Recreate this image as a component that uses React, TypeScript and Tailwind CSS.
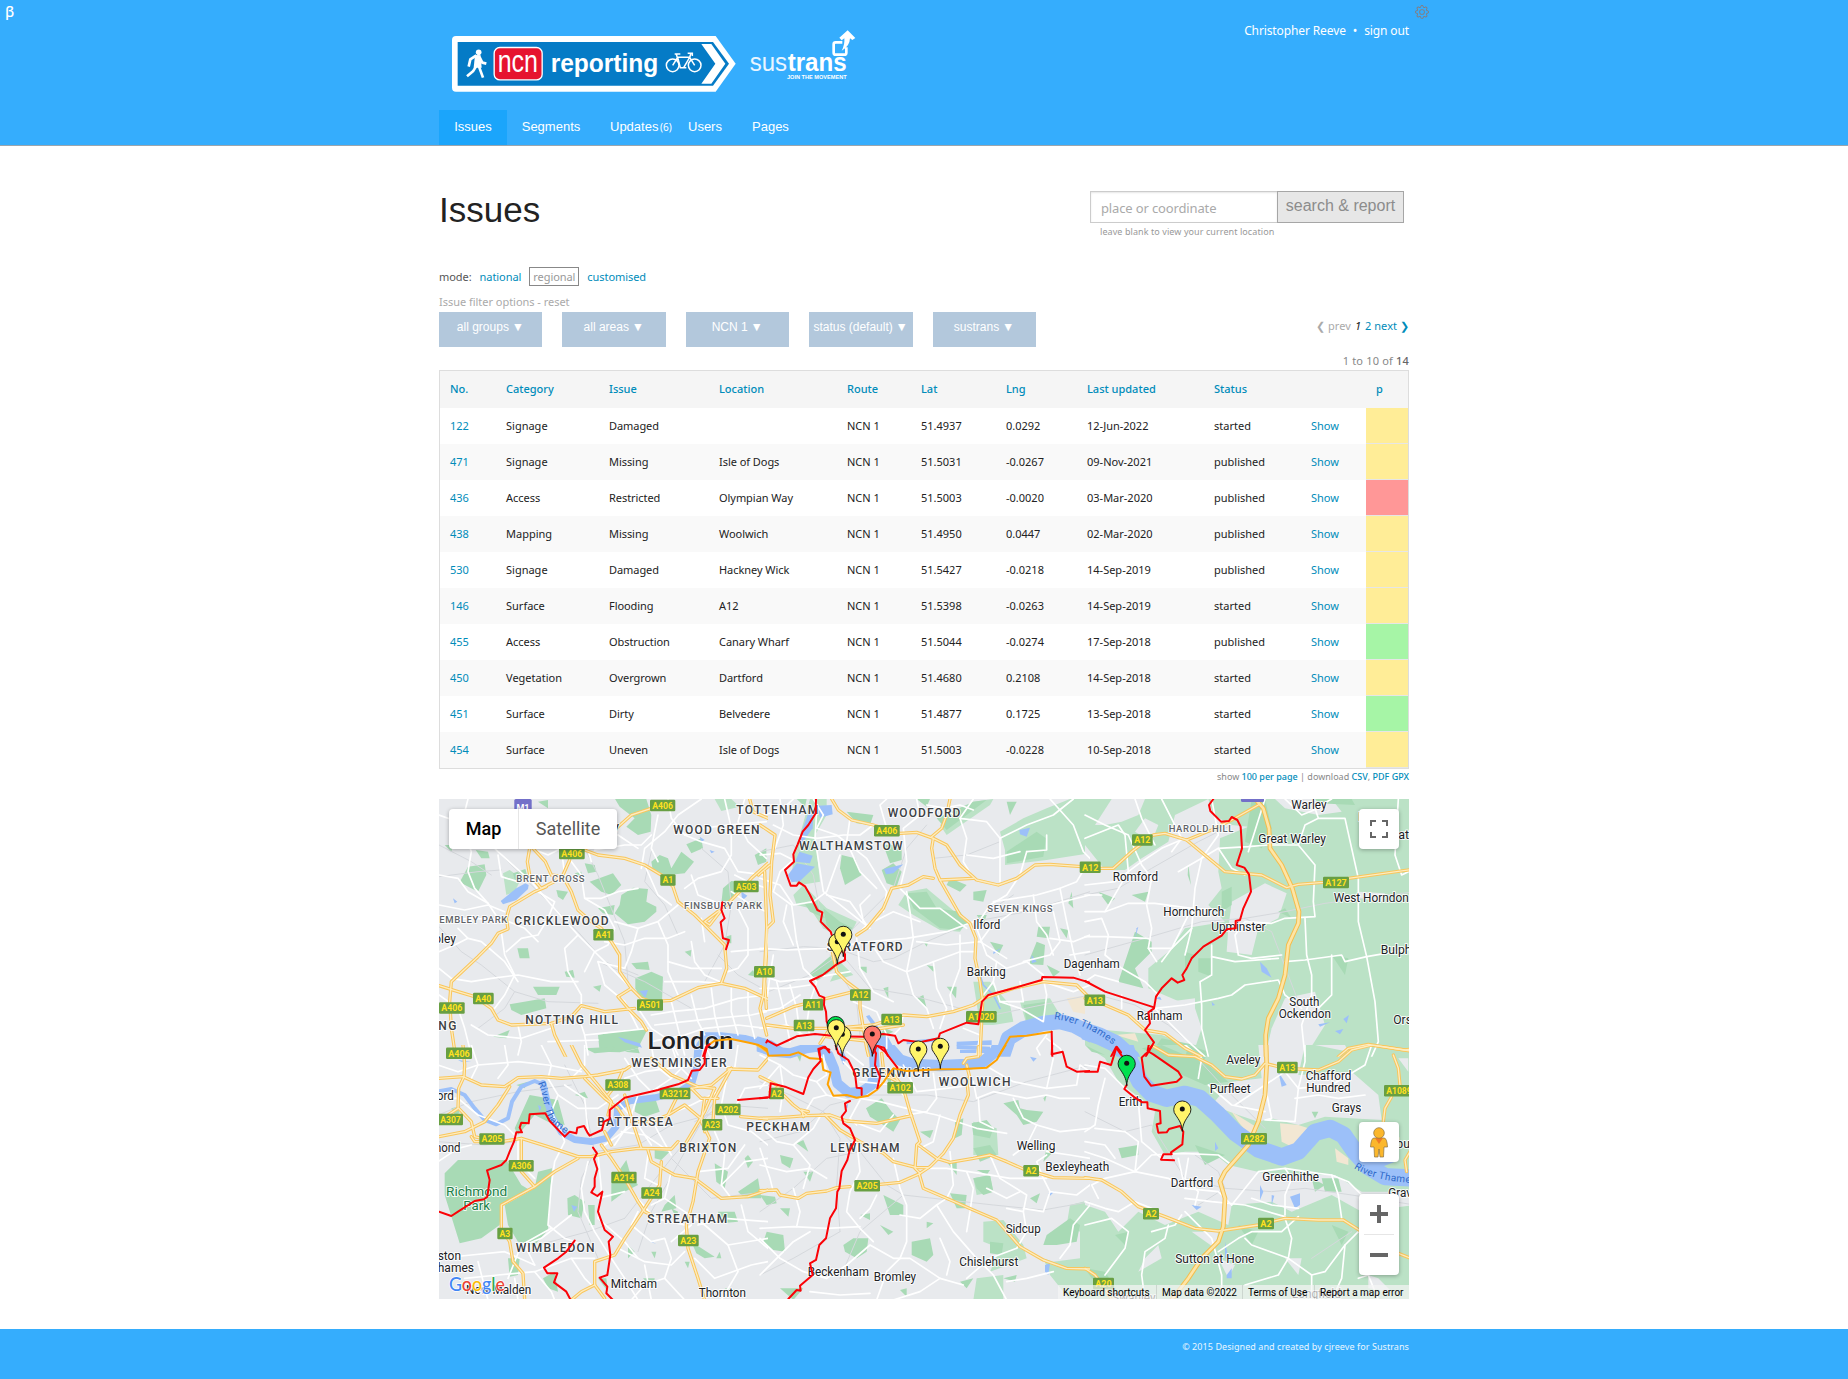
import React from "react";
import { BsGear } from "react-icons/bs";

const rows: string[][] = [
  ["122", "Signage", "Damaged", "", "51.4937", "0.0292", "12-Jun-2022", "started", "y"],
  ["471", "Signage", "Missing", "Isle of Dogs", "51.5031", "-0.0267", "09-Nov-2021", "published", "y"],
  ["436", "Access", "Restricted", "Olympian Way", "51.5003", "-0.0020", "03-Mar-2020", "published", "r"],
  ["438", "Mapping", "Missing", "Woolwich", "51.4950", "0.0447", "02-Mar-2020", "published", "y"],
  ["530", "Signage", "Damaged", "Hackney Wick", "51.5427", "-0.0218", "14-Sep-2019", "published", "y"],
  ["146", "Surface", "Flooding", "A12", "51.5398", "-0.0263", "14-Sep-2019", "started", "y"],
  ["455", "Access", "Obstruction", "Canary Wharf", "51.5044", "-0.0274", "17-Sep-2018", "published", "g"],
  ["450", "Vegetation", "Overgrown", "Dartford", "51.4680", "0.2108", "14-Sep-2018", "started", "y"],
  ["451", "Surface", "Dirty", "Belvedere", "51.4877", "0.1725", "13-Sep-2018", "started", "g"],
  ["454", "Surface", "Uneven", "Isle of Dogs", "51.5003", "-0.0228", "10-Sep-2018", "started", "y"],
];

const priority: Record<string, string> = {
  y: "bg-[#ffed97]",
  r: "bg-[#ff9797]",
  g: "bg-[#a6f5a6]",
};

const COLS =
  "grid grid-cols-[56px_103px_110px_128px_74px_85px_81px_127px_96px_66px_42px] items-center";

/* Each tile covers 330 x 260 map units, drawn on a grid three times finer. */
type Tile = {
  x: number;
  y: number;
  light: string[];
  urban?: string[];
  sand?: string[];
  park: string[];
  lake: string[];
  river: [string, number][];
  rail: string[];
  minor: string[];
  major: string[];
  motorway?: string[];
  red: string[];
  amber: string[];
};

const tiles: Tile[] = [
  {
    x: 438, y: 795,
    light: ["830,12 880,12 905,35 850,48", "195,235 215,225 250,250 230,290 205,300"],
    park: [
      "90,215 140,208 145,240 120,290 65,262", "113,165 150,170 155,190 130,190", "225,235 262,222 270,250 232,260",
      "530,10 625,12 640,60 638,110 600,120 565,95 590,70 545,35", "550,300 585,278 630,282 625,320 655,335 655,350 620,380 570,388 530,355 545,330",
      "455,260 525,235 550,270 520,300 490,290", "440,205 470,210 475,230 450,235", "355,285 390,290 375,315 360,305",
      "640,200 665,180 690,190 700,220 730,170 768,200 740,235 690,240 645,230", "745,148 790,130 795,160 760,175",
      "855,280 880,258 930,262 900,290 880,320 850,325", "238,460 270,460 275,490 245,490",
      "592,550 640,530 675,545 672,620 612,622 592,580", "580,505 630,500 635,525 595,522", "285,575 365,575 355,600 300,600",
      "215,628 320,610 325,640 250,660 220,645", "480,720 560,705 630,700 600,760 545,772 485,770", "465,575 490,570 485,590",
      "380,530 405,525 410,548 385,545", "165,725 215,705 205,730", "930,540 945,525 955,545", "862,425 880,420 880,445 865,445",
      "950,180 985,160 985,200 960,210", "20,150 45,150 40,170", "740,470 760,465 758,485", "480,340 530,330 525,360 495,355",
      "300,20 330,15 330,40", "410,235 430,230 432,250", "940,320 960,318 955,345",
    ],
    lake: [
      "188,318 235,280 262,265 272,270 270,282 235,315 195,328", "605,588 630,585 622,608", "540,725 605,745 612,758 560,742",
      "785,125 800,135 790,140", "45,310 58,320 50,325", "910,290 928,302 912,318", "815,165 830,170 820,175",
    ],
    river: [["780,780 785,750 805,722 850,722 920,730 995,750", 20]],
    rail: [
      "3,395 70,470 130,510 230,590 330,620 480,625", "180,170 280,270 340,330 420,410 500,500 600,540", "3,150 100,200 160,240",
      "790,160 870,230 880,330 860,450 800,560", "3,245 120,230 190,225", "480,500 620,560 760,640", "230,590 200,640 120,700",
      "440,160 480,240 520,340 560,440 570,560", "990,590 900,540 840,480", "640,170 620,260 680,330 720,420",
    ],
    minor: [
      "3,60 60,80 120,110 180,170 280,260 340,330 420,420 500,500 580,580", "90,12 70,90 100,170 90,230 110,280 150,325", "3,240 60,250 90,290 150,325 180,370",
      "3,330 80,345 150,330 200,350", "3,375 100,370 200,375 260,400 300,440", "60,400 90,430 130,440 200,500 240,560", "190,410 200,480 230,540 200,600 170,640",
      "300,290 350,320 330,370 300,420 250,430 205,470", "240,260 190,245 180,180", "370,160 430,240 440,310 500,345 530,400 510,450 470,470 440,530",
      "440,310 490,310 540,290 600,280", "610,220 620,160 680,110 720,60 790,12", "640,120 610,150 560,150 470,165", "690,12 700,70 740,120 790,140 860,160 900,230 980,240",
      "860,12 880,100 880,180 850,230 780,250 740,280", "740,120 790,100 870,90 985,80", "760,240 780,300 830,320 850,350", "530,380 600,400 660,380 720,330",
      "660,380 690,450 690,530 720,600", "600,400 580,470 560,520 480,500", "3,520 40,550 100,560 160,550 240,540 340,560 420,560", "420,420 380,460 390,530 430,600 430,640",
      "3,600 60,640 80,700 100,780", "240,690 250,740 240,780", "100,690 150,720 250,730 340,700", "420,660 440,720 490,715 630,700", "480,500 500,570 560,620 600,700",
      "760,440 770,500 800,540 850,562", "800,440 790,370", "900,340 930,400 930,480 900,520 870,530", "880,470 985,460", "690,500 760,520 850,520", "680,560 780,560 850,565",
      "640,660 700,650 800,640 900,610 985,600", "650,690 740,680 830,670 940,660 985,650", "700,620 720,700 740,780", "760,600 780,680 800,720", "820,580 830,660 845,720", "880,580 880,650 900,720",
      "930,590 930,650 950,730", "640,740 740,720 800,700 900,690 985,700", "600,640 640,700 700,740 720,780", "440,720 450,780", "330,740 480,735", "500,440 560,450 620,430 690,430 740,410",
      "3,470 50,450 90,430", "280,160 330,180 370,160 380,240", "430,90 460,200", "540,120 600,160", "660,60 640,160 660,200", "620,210 660,300 700,330", "880,290 940,330 985,350",
      "920,12 900,80 930,140 985,190", "985,280 930,260 890,240",
    ],
    major: [
      "275,160 268,200 275,240 310,280 345,262 375,240 395,195 395,175", "285,160 322,200 340,240 375,245 400,290 420,345 460,380 490,400 520,440 545,480 545,530 580,580 610,610 640,620 700,616 780,578 850,565 920,580 995,615",
      "325,275 290,290 215,335 205,370 210,402 180,415 160,445 120,485 40,560 35,620 40,700 52,780", "3,572 60,590 110,605 160,640 180,675 220,690 340,685 400,665 430,632 500,650 590,640",
      "440,165 480,180 560,190 620,210 670,240 705,275 720,320 770,360 810,400 860,450 866,520 850,565", "537,98 580,60 640,40 680,40", "990,205 940,250 905,290 865,330 800,380 815,390 850,345",
      "580,580 540,605 570,640 610,680 625,705", "340,685 350,720 385,790", "935,12 945,50 990,70", "980,230 988,440 980,560 985,640",
    ],
    red: ["853,322 850,345 860,370 848,382 855,430 873,435 864,463", "795,785 805,755 815,748", "990,735 985,742"],
    amber: ["812,750 830,737 880,732 940,745 962,750 995,775"],
  },
  {
    x: 760, y: 795,
    light: [
      "150,12 200,12 200,60 165,120 180,260 120,270 95,250 100,190", "100,300 130,270 200,340 290,380 260,440 190,400 150,340 110,330",
      "720,110 790,70 860,40 930,12 990,12 990,175 860,195 735,210 735,165", "540,90 640,20 700,12 690,30 560,120", "640,560 690,560 750,630 760,680 700,690 660,690",
      "210,560 240,500 280,540", "415,330 440,290 500,280 620,380 600,410 540,405 460,360", "780,620 870,610 900,660 800,690",
    ],
    sand: ["920,610 990,600 990,660 940,650"],
    park: [
      "530,70 640,20 680,15 560,105", "370,150 425,150 425,195 390,205", "440,295 500,290 530,340 600,350 625,385 600,405 540,400 460,340", "365,225 400,205 425,230 410,275 380,265",
      "245,180 285,190 305,240 255,270 240,220", "260,50 340,60 330,90 290,85", "740,170 830,110 858,130 850,185 740,205", "150,535 215,480 245,505 190,545 165,560", "640,290 680,285 670,320 640,315",
      "835,395 870,395 865,430 830,425", "810,490 830,440 855,450 850,510 810,508", "790,630 860,620 850,660 800,680", "190,340 240,380 280,400 240,430 200,390", "570,250 620,270 600,290 560,270",
      "470,12 510,12 500,35", "690,440 730,450 715,480", "900,400 925,405 920,430", "560,575 590,575 588,610", "470,610 490,600 500,640", "340,740 375,700 400,710", "925,325 935,290 940,340", "740,20 770,20 750,60",
      "370,580 385,575 385,610", "500,510 525,515 520,530", "130,320 170,330 195,370 150,350", "490,440 505,440 500,455", "860,510 900,530 880,545", "295,515 320,515 320,535", "110,12 140,12 135,35", "650,360 680,360 670,390",
    ],
    lake: ["172,32 215,30 218,58 180,68", "150,40 160,60 158,100 118,155 125,110", "84,240 110,205 165,215 120,258 95,262", "118,170 158,182 150,205 105,200", "372,222 430,208 400,235 378,238", "778,105 810,98 800,125 780,118", "590,740 695,736 695,750 590,752", "600,764 690,762 690,774 600,774", "440,738 540,728 540,738 440,748", "700,470 725,458 700,478", "815,480 830,500 815,505", "318,664 328,660 362,705 350,712"],
    river: [["-5,735 30,745 75,775", 20], ["335,790 350,745 375,735 400,780", 24], ["722,800 745,730 790,702 850,685 900,680 945,692 1000,722", 46], ["660,540 670,570 700,600 720,640", 5]],
    rail: ["0,470 130,455 230,460 340,500 400,490 500,440 640,380 760,300", "200,470 280,400 400,280 440,160 500,90", "0,170 100,150 160,240 190,400", "230,460 330,580 450,600 600,640 700,660 990,600", "0,600 150,540 250,470", "520,190 620,180 720,140", "640,380 800,350 990,290", "210,480 290,620 300,720"],
    minor: [
      "0,60 60,50 100,12", "0,180 60,175 100,195 60,230 40,290 95,330 110,440", "0,250 60,270 100,330 160,320 200,290 240,180", "60,12 70,90 45,160", "190,60 170,100 230,120 320,190 380,290 370,350", "170,50 165,130 190,290 330,400",
      "270,70 260,140 300,230 350,280", "340,90 300,120 250,120 170,130", "470,12 480,60 430,100 440,200 420,280 480,340 540,340 620,400", "580,60 560,40 500,30", "640,12 600,70 620,130 610,200 640,250", "600,70 680,80 720,130 720,260",
      "720,130 800,90 880,60 940,12", "870,12 940,90 970,170 990,190", "800,170 860,165 860,120", "800,170 780,240 740,300 690,330 650,390", "980,210 950,260 900,280 830,300 700,320", "820,300 830,380 860,420 880,480", "900,280 920,380 940,470 960,540",
      "990,300 870,330 760,350 690,400 660,440 740,490", "880,350 900,440 870,480 790,500", "650,400 680,480 740,520 800,500 850,540", "0,460 80,465 200,460 330,440 440,430 560,410 640,380", "100,450 70,380 80,330", "110,440 130,520 170,560 150,620",
      "290,430 300,520 340,590 400,620", "330,440 370,500 440,530 460,600 500,640 520,700", "440,530 520,500 600,470 640,470", "520,500 530,580 560,640 540,700", "440,290 450,350 460,430 440,530", "600,420 600,520 570,600 580,650", "0,540 60,560 150,550 270,530",
      "40,480 30,540 20,620", "0,580 80,580 150,570", "0,650 60,640 120,600", "50,560 70,640 90,740", "90,570 110,640 120,720", "150,620 140,690 150,720", "280,620 350,650 380,720 380,760", "430,660 420,700 400,720", "700,560 720,620 780,640 850,680 860,600 850,550",
      "780,560 790,620 720,620", "850,560 940,590 990,570", "480,380 400,350 320,390 290,420", "320,390 270,320 200,300", "40,90 100,120 170,130", "330,300 300,330 310,380", "380,100 360,30 380,12", "610,700 660,720 650,780", "860,720 830,760 840,780", "860,730 900,760 910,780", "0,700 80,690 130,720", "660,440 560,450 470,440", "710,500 700,560 670,600",
      "545,40 600,30 640,45", "990,420 940,440 870,430", "930,480 990,470", "620,180 700,190 780,170", "190,60 160,12",
    ],
    major: [
      "215,12 235,45 275,75 340,90 420,115 470,112 520,130 560,150 600,210 650,255 715,270 770,250 825,210 870,208 965,215", "520,130 515,160 525,220 540,255 600,360 630,385 648,430 645,490 660,560 668,620 660,780", "515,125 545,100 560,60 570,12", "540,255 640,250", "520,250 490,245 445,270 395,280 370,340 320,400 290,420",
      "0,90 45,120 35,200 30,300 40,380 20,400 10,600 0,640 20,720", "-5,240 30,210", "20,670 100,635 200,610 280,590", "215,460 230,530 260,560 300,590 300,640 320,760 330,800", "20,690 100,700 220,700 340,690 430,660 500,665 580,650 640,630 670,610 760,580 850,560 950,570 990,610", "200,725 320,738", "180,745 210,700 330,705 430,690",
    ],
    red: [
      "168,12 167,55 145,90 128,110 113,148 100,178 102,200 75,225 92,272 110,272 117,262 135,274 150,300 172,345 187,352 182,380 212,410 225,450 255,478 255,495 230,508 188,540 150,558 165,575 178,602 193,608 192,630 198,650 200,680 212,705",
      "22,737 50,752 80,738 110,724 165,717 230,724 310,725 370,717 405,722 415,745 430,735 480,742 535,730 540,715 620,683 655,688 666,620 685,600 760,580 845,555 847,546 940,548 995,565",
      "180,785 178,765 190,757 208,764", "340,775 350,752 372,758 385,785", "875,710 877,785", "255,450 252,480",
    ],
    amber: ["715,785 750,725 800,722 875,710"],
  },
  {
    x: 1085, y: 795,
    light: ["0,12 60,12 0,70", "0,12 990,12 990,785 0,785"],
    urban: [
      "80,12 180,12 160,60 110,80 60,90 30,90", "0,150 60,225 120,225 170,190 250,140 270,60 370,12 385,60 440,90 490,95 405,130 400,230 410,280 370,330 420,380 300,400 250,470 190,520 190,580 330,640 350,700 330,760 230,720 0,700",
      "440,320 540,265 605,295 580,370 520,400 500,480 425,470 430,400", "570,12 740,12 770,50 700,60 600,40", "820,290 900,295 890,320 820,310", "600,610 690,590 720,690 660,785 540,785 560,700", "250,620 330,610 330,650 260,650", "150,110 180,70 220,90 200,140",
    ],
    sand: ["0,690 90,720 150,715 160,740 60,710"],
    park: ["150,410 200,440 200,470 150,520 175,580 100,560", "410,290 440,275 440,330 410,350", "340,490 380,490 380,545 340,530", "500,12 540,12 560,100 530,160 480,140", "690,12 800,12 810,30 700,25", "580,350 600,340 620,370", "230,730 330,750 350,785 190,785", "300,470 330,480 300,520", "740,480 790,490 780,540", "310,210 318,270 308,240", "40,290 90,310 70,330", "850,90 900,110 890,150", "140,300 190,290 180,320"],
    lake: ["525,500 545,520 560,548 530,530", "775,672 792,660 785,685", "700,688 735,682 705,695", "750,708 775,702 765,718", "155,400 160,395 150,432", "210,610 225,605 230,615", "380,620 390,630 382,632"],
    river: [["-20,702 40,722 90,745 140,790", 52]],
    rail: ["0,300 100,280 200,220 340,140 440,90", "0,480 180,430 350,380 480,370 600,350 720,325 990,290", "480,370 560,410 640,620", "40,600 150,630 250,690 310,740"],
    minor: [
      "0,60 60,90 130,120 170,210 200,250 185,330 200,400 190,460 215,500", "0,270 90,260 170,200 230,160 300,130", "0,350 60,350 130,325 210,325 320,340 420,345", "0,380 50,370 70,420 60,480 110,520 180,560 220,600", "150,12 170,70 210,150", "230,12 290,130 260,170",
      "280,230 350,190 400,160 490,155 550,150", "350,190 330,280 320,400 300,480", "320,340 260,460 230,500", "380,12 400,120 350,190", "550,150 640,150 690,210 685,320 690,365 600,370 560,385 480,380 450,420 460,480 500,490 590,480",
      "640,150 660,90 700,70 690,40 740,12", "600,12 650,60 700,40", "700,70 780,70 800,160 820,250 820,380 845,485 780,500 770,480 660,495 600,500", "940,12 930,180 950,240 970,230", "845,485 990,460", "660,370 665,480 680,540 680,600 650,690 660,785", "380,450 380,540 345,560 350,630 350,700 370,785",
      "380,485 450,500 580,490", "210,640 300,630 400,610 440,600 480,570 580,555 600,600 650,640", "0,425 60,425 190,430", "100,560 30,540 0,560", "210,640 260,690 310,740 360,785", "50,300 0,300", "190,460 260,460 290,430 320,400", "400,160 440,220 480,240", "60,350 130,230 120,120 100,90 0,130", "110,600 110,640", "740,480 740,600 700,640", "490,170 540,12", "860,785 880,740 870,620 845,485",
    ],
    major: ["-10,220 85,220 140,170 205,120 240,115 305,135 420,230 530,240 605,278 640,268 715,262 790,250 990,222", "305,135 380,105 440,75 520,30 525,12", "0,610 60,630 130,660 180,705 240,715 300,760 350,785", "760,785 790,760 850,748 990,770"],
    motorway: ["500,0 535,40 552,100 555,160 590,210 622,280 642,350 640,385 610,450 600,540 580,610 550,670 542,720 543,790"],
    red: [
      "385,12 372,30 376,48 408,80 432,78 440,66 457,75 467,95 471,160 455,210 478,218 492,238 498,290 475,340 465,375 452,378 452,400 425,403 410,422 355,455 320,490 305,520 292,540 298,555 278,563 260,550 230,580 213,605 207,640 190,652 195,685 180,705 207,742 182,785", "0,558 60,590 207,637", "78,785 93,757 112,785",
    ],
    amber: [],
  },
  {
    x: 438, y: 1045,
    light: [],
    park: [
      "20,385 60,345 205,345 250,420 275,435 190,480 185,540 130,580 65,595 20,450", "200,480 290,430 300,380 342,370 335,480 330,555 290,600 240,590 210,540", "275,150 360,165 380,240 330,230 290,210 240,270 230,250", "290,155 315,170 310,200", "595,155 650,155 665,200 620,215 590,200", "650,315 695,320 670,345 650,340",
      "388,460 410,450 440,470 430,520 390,510", "520,410 565,345 575,380 600,420 560,440 520,470", "410,150 440,140 450,160", "680,480 710,450 715,490 670,500", "830,355 870,380 860,430 835,410", "840,500 890,500 900,530 850,535", "775,625 760,590 830,635 800,640", "210,640 245,640 240,690 215,695", "315,700 350,680 360,740 330,730",
      "615,700 650,700 645,730", "930,330 945,350 930,370 920,340", "700,490 720,500 715,520", "740,650 755,650 750,670", "570,600 590,620 570,640", "40,190 60,185 65,205 50,210", "235,120 270,110 260,130", "480,700 505,700 510,740", "900,440 960,400 970,460 920,460", "450,480 470,480 470,540 455,540", "860,730 900,735 890,755", "845,620 850,640 835,640", "640,620 655,620 650,640", "560,20 600,10 605,25", "440,10 530,5 520,20 470,25",
    ],
    lake: ["400,480 418,485 408,500", "300,180 310,185 305,200", "630,585 655,597 640,592", "60,45 100,50 70,50"],
    river: [["-5,140 40,132 80,150 110,190 140,225 175,238 210,220 222,170 250,125 290,108 318,120", 12], ["315,115 328,170 342,215 370,262 410,284 460,290 505,280 535,245 538,190 575,168 650,158 720,142 762,115 775,70 778,20 785,-20", 20]],
    rail: ["0,210 100,170 240,140 400,120", "380,60 440,180 470,320 430,400 420,500 480,640", "240,290 140,300 0,290", "470,320 600,300 700,240 850,200", "560,520 700,340 820,200", "300,600 450,560 560,520", "700,340 820,460 990,440", "870,100 780,250 640,500 600,620", "770,230 860,180 990,190"],
    minor: [
      "100,0 120,60 100,100", "200,0 210,60 180,100", "310,0 340,60 330,100", "440,0 440,60 400,100", "0,160 60,160 120,210 200,240 240,280", "0,350 60,310 100,300", "330,100 360,150 420,190 480,190 540,150", "360,150 340,200 370,260 380,290 350,350 340,420 330,540 380,580 440,600",
      "380,120 440,160 450,260", "450,350 430,430 440,500 470,560 520,640", "480,330 490,430 480,520 560,590 600,640", "340,550 250,600 210,700", "240,280 240,350 290,400", "0,640 100,630 200,620 290,660", "290,660 260,600 310,580 400,510", "80,700 180,690 290,680 400,640 470,640", "290,680 340,740 350,765", "400,640 440,700 460,720",
      "520,640 560,700 600,765", "540,610 620,650 700,660 740,620", "600,500 580,540 640,590 680,580 700,640 680,700 740,765", "560,440 480,460", "540,170 600,240 640,300", "600,150 570,240 530,300", "500,300 600,230 690,210 760,180 840,140", "560,40 600,100 640,140 700,100 740,60", "640,0 650,60 700,100", "560,100 620,80 690,70 780,60", "700,0 720,60 760,100",
      "870,80 850,180 870,240 940,260 990,300", "880,210 920,130 990,120", "830,260 860,330 850,420 880,460", "850,420 920,350 990,340", "780,380 870,370 920,300", "700,380 680,460 640,480", "680,460 740,500 800,540 870,600 900,680 850,765", "760,540 700,590", "780,540 860,520 990,530", "870,600 990,580", "770,640 830,700 940,660 990,650",
      "630,330 620,400 660,420", "590,450 650,520 740,540", "910,480 930,560 990,610", "550,260 620,270 680,310", "800,0 830,60 900,70", "900,0 890,70", "0,60 60,80 120,60 240,50 330,60 430,80", "230,700 240,765", "120,650 150,765", "700,330 660,260 640,220", "620,660 640,765", "680,700 620,720 580,765",
    ],
    major: [
      "3,100 75,95 130,120 200,125 240,98 310,95 370,100 440,95 480,90 560,75 575,65", "75,0 80,60 78,95 62,130 60,190 0,230", "62,190 100,230 110,275 130,280", "3,275 80,260 140,230 180,180 215,125", "100,275 110,290 190,290 250,280 330,305 420,335 460,335 520,320 600,310 700,312 720,290",
      "420,340 350,380 290,425 190,480 190,550 215,590 225,650 255,685 260,765", "250,280 250,380 290,425", "400,0 430,60 480,120 520,170 510,210", "440,100 500,160 540,190 560,220", "555,75 540,110 510,150", "560,150 580,220 610,310", "490,300 520,340 560,400 600,470 620,500 640,510", "520,300 500,260",
      "630,315 640,350 710,390 770,400 850,460 930,455 990,435", "670,350 665,420 620,490 560,580 530,630 470,650 470,720 430,740 400,765", "470,720 500,760", "800,160 790,230 815,280 780,380 765,470 745,540 750,610 780,700 800,765", "880,70 820,120 760,130 720,150 690,210 640,230 580,230", "880,70 830,160 825,230 800,260",
      "640,40 700,90 780,125 830,130", "870,72 960,75 990,40", "690,210 740,180 800,230", "740,300 800,200 830,130", "908,215 990,222", "840,160 790,160 760,130", "960,0 990,20",
    ],
    red: [
      "810,-5 800,30 800,55 785,75 762,77 750,105 720,118 682,128 660,135 560,158 515,195 515,222 498,230 492,255 455,272 448,262 438,243 418,248 415,265 395,260 380,275 335,228 322,205 275,208 272,235 250,233 245,248 252,262 235,262 228,290 215,320 205,345 190,360 147,376 155,405 148,455 138,463 110,468 60,500 40,513 3,500",
      "465,308 477,325 468,342 478,372 470,400 470,425 460,442 478,453 493,440 480,500 500,555 525,575 512,590 517,630 508,690 485,698 508,725 505,745 525,765", "410,587 385,620 360,640 318,668 328,685 358,685 348,712 385,740 398,765", "900,165 995,157",
    ],
    amber: [],
  },
  {
    x: 760, y: 1045,
    light: ["990,465 930,480 920,540 960,560 960,640 880,650 850,640 870,690 930,765 990,765", "670,530 730,525 790,600 800,640 690,680 720,610 670,590", "640,230 710,250 715,330 640,330", "640,400 690,390 700,440 650,450", "650,700 730,690 730,765 640,765"],
    park: [
      "318,190 365,160 395,200 420,225 400,260 370,240 330,215", "635,235 680,225 700,250 690,280 640,270", "585,230 610,220 605,270 585,280", "730,175 775,165 780,190 800,195 850,200 830,230 790,240 770,210", "640,310 690,300 710,330 660,350", "850,160 860,150 855,170", "20,560 70,570 75,620 40,615 10,590", "250,600 280,580 325,580 320,620 290,640 255,620",
      "455,590 510,580 520,630 500,650 455,630", "370,450 430,480 430,510 390,510", "570,445 620,450 615,490 590,490", "640,400 690,390 700,440 670,450 650,430", "560,350 590,350 590,390", "60,330 100,340 90,370 65,355", "110,295 130,285 145,320", "130,380 160,380 150,410", "0,450 45,455 50,475 20,480", "810,460 840,445 830,475", "300,510 330,505 330,525",
      "860,570 930,520 960,540 950,590 890,600 850,600", "360,540 400,560 385,570", "60,490 90,490 85,515", "690,590 730,595 725,630 690,625", "600,710 640,700 620,730", "730,700 770,690 765,710", "860,310 880,320 850,350", "650,375 690,375 680,390", "380,100 395,95 390,125", "60,730 130,730 100,765", "480,260 520,255 510,280", "420,735 440,730 440,755", "100,10 130,10 120,50", "500,530 520,535 500,550",
    ],
    lake: ["855,660 870,655 865,690 855,680", "865,445 885,438 870,452", "265,175 262,190 255,185", "235,25 245,10 260,40 250,60", "590,0 690,5 690,14 590,12", "810,35 830,40 820,50"],
    river: [["-5,5 40,20 90,25 140,10 175,5 205,30 222,70 232,115 265,143 305,140 335,120 345,80 342,30 335,-15", 30], ["375,-20 390,10 420,45 460,58 540,62 620,58 670,50 705,20 722,-20", 34]],
    rail: ["0,110 90,150 190,200 300,320 380,420 430,450 700,480 850,495 990,470", "190,200 240,280 230,420 240,560", "0,290 120,260 210,180 330,150 500,150 640,170 800,110 990,60", "300,320 200,340 100,430 0,500", "240,560 100,640 0,690", "430,450 300,560 240,700"],
    minor: [
      "0,130 60,60 100,90 170,110 200,150", "60,200 70,130 60,60", "130,210 160,160 200,150 260,165", "300,160 360,170 440,190 530,210 650,250 740,265", "300,165 270,220 290,240", "0,245 50,290 100,300 160,250 180,215", "100,300 150,360 130,430", "0,310 30,400 40,440", "0,360 80,380 150,370 200,400",
      "290,290 300,380 270,440 260,500 300,550 340,590", "400,340 420,430 440,480 440,590 420,640", "0,550 100,545 200,550 300,545", "0,580 60,640 130,680 200,700", "0,690 50,640 100,590 150,560", "200,700 260,660 330,600 400,640 450,640 540,700 610,720", "540,700 480,740 400,765", "150,740 240,750 330,745", "420,640 380,680 350,765",
      "470,370 560,370 660,385 750,400 860,400", "570,320 580,420 560,460 530,480 580,560 650,640", "530,480 480,520 420,510", "620,380 640,430 630,500 620,560", "690,330 720,400 800,450 790,500 740,490", "790,500 800,560 770,610", "640,110 650,160 700,140 800,160 860,150 900,160 990,160", "655,160 660,230 700,250", "760,160 790,220 830,240 800,300 760,330",
      "830,240 900,260 990,250", "860,330 830,350 850,400 870,440 950,450 990,420", "870,440 850,500 790,490", "990,480 940,540 930,600 900,640", "650,640 700,690 740,765", "770,610 690,640 620,700", "430,60 470,140 560,130 640,120", "520,85 530,160 500,200 440,210", "540,210 520,290 480,310", "400,210 360,260 280,230", "690,70 760,110 860,130 880,40",
      "860,130 950,120 960,60 990,80", "300,110 400,120 440,160", "540,580 570,650 560,690", "350,450 330,490 300,520", "680,430 740,460 780,440", "0,30 60,60", "880,680 800,700 740,710", "990,340 930,330 860,320", "190,30 200,90 170,110", "250,50 290,90", "260,20 310,60", "100,430 120,500 110,545",
    ],
    major: [
      "0,220 60,218 140,212 210,210 260,228 350,235 455,212", "60,140 100,180 140,210", "130,215 125,195 145,200", "195,210 240,255 300,290 370,325 400,350 470,368 505,368", "395,80 430,130 450,200 480,290 470,300 465,370 480,385", "475,300 530,340 570,352 640,340 690,330 740,350 790,372", "838,385 880,398 990,400", "620,100 625,150 600,210 580,280 550,325 510,365 475,388 420,412 360,418",
      "270,425 230,428 200,438 140,445 115,460 60,450 50,435 0,437", "478,388 490,430 560,460 640,495 710,525 780,605 850,645 920,670 990,672", "610,55 620,40 655,35 655,5", "0,95 60,125 30,140", "365,25 370,70 385,95 450,130",
      "620,60 630,100",
    ],
    red: [
      "0,160 28,157 32,115 75,125 130,147 145,97 160,72 182,48 175,12 195,5 208,22", "225,-5 235,25 265,45 285,85 290,128 305,130 305,150", "335,0 348,25 345,60 360,95 352,130", "350,0 375,20 412,68", "877,-5 875,28 908,20 920,65 950,80 990,78",
      "270,168 255,175 258,198 245,215 250,235 270,250 285,285 268,320 262,345 245,378 238,430 232,440 228,490 210,520 198,580 178,600 168,645 150,655 158,690 120,722 122,737 110,735 85,762",
    ],
    amber: ["-5,0 20,12 25,32 90,30 115,22 150,40 185,42 190,75 212,82 203,118 220,152 260,150 290,158 325,152 350,135 370,112 385,90 400,70 440,78 540,73 610,72 680,68 710,45 737,0"],
  },
  {
    x: 1085, y: 1045,
    light: ["0,0 990,0 990,765 0,765"],
    urban: [
      "0,0 60,40 100,110 180,170 210,200 200,260 240,330 300,320 380,320 430,360 560,390 750,390 830,440 990,440 990,480 830,500 740,450 620,500 560,470 440,480 430,540 340,500 240,540 160,500 100,560 60,500 0,480", "520,0 660,0 640,90 800,80 880,150 890,225 720,215 640,240 560,220 520,230 460,210 380,180 440,110 530,100",
      "690,0 780,0 790,20", "180,640 220,600 230,640 160,680", "320,560 400,560 390,610", "880,700 850,690 850,730 920,740", "600,640 650,640 640,690", "400,640 450,660 430,700", "940,40 970,40 970,80",
    ],
    sand: ["585,235 640,240 670,250 630,310 590,290", "440,200 520,250 500,280 460,230", "750,310 790,340 790,360 755,350"],
    park: ["170,10 230,0 370,60 430,110 360,120 280,85 200,25", "310,0 370,20 350,60 300,40", "0,0 60,30 20,20", "100,310 160,300 160,330 110,340", "710,400 760,400 770,440 720,440", "0,670 60,680 100,740 20,700", "590,310 600,320 580,320", "740,540 790,560 770,600", "90,570 130,560 120,600", "330,300 420,330 360,360", "680,400 720,420 690,440", "460,540 520,560 500,600", "680,200 700,200 690,220"],
    lake: ["615,455 645,445 645,480 630,490", "525,420 535,440 525,465", "320,480 350,485 335,495", "420,590 430,640 420,640", "425,690 440,670 440,700 425,700", "870,350 930,350 880,370", "580,80 605,120 590,125", "390,290 400,310 390,318", "560,450 568,452 560,480"],
    river: [["115,-10 135,50 165,110 200,145 245,160 300,148 345,160 395,205 450,262 520,312 590,336 640,318 690,262 735,250 775,270 810,320 850,365 900,395 1000,400", 52]],
    rail: ["0,200 120,260 200,240 300,400 420,430", "420,430 560,440 660,430 800,450 990,480", "300,0 420,130 540,250", "680,640 800,560", "340,480 420,430 400,380 330,330"],
    minor: [
      "0,60 60,70 110,120 160,170 170,290 230,340", "60,100 40,180 30,240 0,260", "0,320 60,340 150,380 200,330 290,325 400,330 440,360", "150,380 160,290 120,260 30,250", "150,380 250,400 300,430 400,440 440,480", "0,470 60,490 100,500 150,470 200,490", "40,460 20,420 60,400 150,380", "300,460 380,470 480,480 600,515",
      "440,480 520,380 600,370 700,385 740,390 790,410 830,450", "600,370 620,400 600,450 600,510", "740,390 760,450 770,520", "640,515 590,560 500,560 460,580 400,620", "600,520 620,580 610,640 500,600 480,580", "610,640 680,690 680,765", "680,690 720,680 780,600 820,560", "780,600 770,700 740,765", "300,430 280,340", "250,540 240,580 180,620 170,690 180,765",
      "0,540 80,520 130,560 120,610 60,690", "300,500 380,580 410,690 410,765", "450,180 540,120 600,80", "370,120 440,180 540,200", "540,120 560,220 540,225 630,230 640,130 600,80", "640,130 740,120 790,90", "630,160 700,150 760,160 840,150", "660,0 660,50 640,130", "860,0 840,60 790,90", "330,480 340,440 300,400 310,340", "200,560 270,540 290,510", "500,460 560,480 640,490",
      "820,700 850,690 880,765", "300,0 350,40 340,100", "0,290 60,300 90,340", "480,720 580,690 610,640",
    ],
    major: [
      "190,-5 250,30 330,35 380,60 420,95 470,102 510,90 540,55 600,70 700,75 760,50 800,15 860,0 960,15 990,10", "925,30 940,70 945,120", "0,398 50,405 110,440 160,485 240,515 330,550 400,558 520,540 600,520 700,525 775,525 830,560", "895,230 900,190 920,155", "940,625 990,645", "0,670 30,690 60,730 80,765", "975,320 960,345 965,380",
    ],
    motorway: ["543,-5 545,60 540,150 520,230 490,300 420,380 405,410 420,460 415,545 400,590 350,640 310,700 260,765"],
    red: [
      "0,80 38,80 45,50 78,60 95,5 108,22", "205,-5 190,20 180,28 170,38 178,95 198,122 275,110 290,97 280,80 205,28 188,18 192,-5", "125,120 118,132 150,158 172,172 187,172 188,190 225,198 227,235 215,238 220,263 245,262 252,252 285,243 295,260 292,298 258,322 260,328 235,328 228,344 267,346",
    ],
    amber: [],
  },
];

/* text, left, baseline, width, kind */
type Kind = "c" | "s" | "t" | "l" | "g";
const labels: [string, number, number, number, Kind][] = [
  ["TOTTENHAM", 736.3, 814, 82, "c"], ["WOOD GREEN", 673.3, 834, 86.3, "c"], ["Finchley", 571, 831, 48, "t"], ["BRENT CROSS", 516.3, 882.3, 68.3, "s"],
  ["FINSBURY PARK", 684, 909.3, 78, "s"], ["EMBLEY PARK", 439.3, 923.3, 68, "s"], ["CRICKLEWOOD", 514.3, 925, 94.3, "c"], ["Wembley", 407, 943, 49, "t"],
  ["NOTTING HILL", 525.3, 1024.3, 92.7, "c"], ["London", 647.5, 1049, 86, "l"], ["EALING", 407, 1029.7, 49.5, "c"],
  ["WOODFORD", 887.7, 817, 72.7, "c"], ["WALTHAMSTOW", 799, 850, 103.7, "c"], ["SEVEN KINGS", 987.3, 912.3, 65.3, "s"], ["Ilford", 973.3, 929, 27, "t"],
  ["Barking", 966.7, 976, 39, "t"], ["Dagenham", 1063.7, 967.5, 56, "t"], ["STRATFORD", 826.7, 951, 76, "c"],
  ["Warley", 1291.3, 809.3, 35.3, "t"], ["Great Warley", 1258.3, 843, 67.7, "t"], ["HAROLD HILL", 1168.7, 832.3, 64.7, "s"], ["Romford", 1112.7, 881, 45.3, "t"],
  ["West Horndon", 1333.7, 902, 75, "t"], ["Hornchurch", 1163.3, 916, 61, "t"], ["Upminster", 1211.3, 931, 54.3, "t"], ["Bulphan", 1380.7, 954, 44, "t"],
  ["Rainham", 1136.7, 1020, 45.7, "t"], ["South", 1289.3, 1006, 30, "t"], ["Ockendon", 1278.7, 1018, 52.3, "t"], ["Orsett", 1393.3, 1024, 33, "t"], ["Little", 1358, 821, 27, "t"], ["Great", 1379, 839, 30, "t"],
  ["WESTMINSTER", 631.3, 1067, 95.3, "c"], ["Brentford", 405, 1099.5, 49, "t"], ["BATTERSEA", 597.3, 1126.3, 75.3, "c"], ["PECKHAM", 746.3, 1131, 63.7, "c"],
  ["BRIXTON", 679.3, 1152, 57, "c"], ["Richmond", 409, 1151.7, 51.5, "t"], ["Richmond", 446, 1195.5, 61.3, "g"], ["Park", 463.3, 1209.5, 26.7, "g"],
  ["STREATHAM", 647.3, 1222.7, 80, "c"], ["WIMBLEDON", 515.7, 1251.7, 78.7, "c"], ["Kingston", 414, 1260, 47, "t"], ["upon Thames", 401, 1272, 73, "t"],
  ["New Malden", 466, 1294, 65.3, "t"], ["Mitcham", 610.7, 1287.7, 46.3, "t"], ["Thornton", 698.7, 1296.7, 47.3, "t"],
  ["GREENWICH", 852.3, 1077, 77.7, "c"], ["WOOLWICH", 938.7, 1086, 71.7, "c"], ["LEWISHAM", 830.3, 1152, 69.3, "c"], ["Welling", 1016.7, 1150, 38.7, "t"],
  ["Bexleyheath", 1045.3, 1170.7, 64, "t"], ["Beckenham", 807.7, 1275.7, 61.3, "t"], ["Bromley", 873.7, 1280.7, 42.3, "t"], ["Chislehurst", 959.3, 1265.7, 59, "t"], ["Sidcup", 1005.7, 1232.7, 35, "t"],
  ["Aveley", 1226.3, 1063.7, 34, "t"], ["Chafford", 1305.7, 1079.7, 45.7, "t"], ["Hundred", 1306.3, 1091.7, 44.3, "t"], ["Purfleet", 1209.7, 1092.7, 41, "t"], ["Grays", 1331.7, 1111.7, 29.7, "t"],
  ["Erith", 1118.7, 1105.7, 23.7, "t"], ["Greenhithe", 1262.3, 1181, 56.7, "t"], ["Dartford", 1170.7, 1186.7, 42.7, "t"], ["Sutton at Hone", 1175.3, 1262.7, 79, "t"],
  ["Tilbury", 1383, 1147.5, 37, "t"], ["Gravesend", 1388.3, 1197, 55, "t"], ["Swanley", 1112.3, 1302.3, 43.3, "t"], ["Longfield", 1291.7, 1298.3, 49.3, "t"],
];

const kinds: Record<Kind, { size: number; fill: string; weight: number }> = {
  c: { size: 12, fill: "#3c4043", weight: 500 },
  s: { size: 9.5, fill: "#5f6368", weight: 500 },
  t: { size: 12, fill: "#202124", weight: 400 },
  l: { size: 24.5, fill: "#202124", weight: 500 },
  g: { size: 13, fill: "#218049", weight: 400 },
};

/* text, left, top, width */
const shields: [string, number, number, number][] = [
  ["A406", 650, 799.7, 25.3], ["A406", 559, 847.7, 25.7], ["A1", 660.3, 874.3, 15.3], ["A503", 733.7, 880.7, 25], ["A41", 593.3, 929, 20.3], ["A40", 473, 992.7, 20.7],
  ["A406", 439, 1002.3, 25.7], ["A501", 637, 999.3, 26], ["A10", 754, 966, 20.7], ["A406", 446, 1047.5, 26], ["A406", 874, 825, 25.7], ["A12", 850, 989.3, 20.7], ["A11", 803, 999, 20.3],
  ["A13", 793.7, 1019.7, 20.7], ["A13", 881.3, 1013.7, 20.7], ["A1020", 966, 1011, 30.7], ["A12", 1079.7, 861.5, 21], ["A12", 1132, 834.3, 20.7], ["A127", 1323, 876.7, 26], ["A13", 1084.5, 994.5, 20.7],
  ["A308", 605.3, 1079.3, 25.3], ["A3212", 659.7, 1087.7, 30.7], ["A202", 715.3, 1103.7, 25.3], ["A23", 702.3, 1119, 20], ["A307", 438, 1113.7, 25], ["A205", 479.3, 1133.3, 25.3], ["A306", 508.7, 1160, 25], ["A214", 611.3, 1171.7, 25.3],
  ["A24", 641.3, 1187.3, 20.7], ["A23", 678, 1234.7, 20.7], ["A3", 497.3, 1227.7, 15.3], ["A2", 769, 1087.7, 15], ["A102", 887.3, 1082, 25.7], ["A2", 1023.3, 1165, 15.7], ["A205", 854.3, 1180, 25.7],
  ["A13", 1277, 1061.7, 20.7], ["A1089", 1384, 1085, 30], ["A282", 1241, 1133, 26], ["A2", 1143, 1208, 16], ["A2", 1258, 1217.7, 16], ["A20", 1093, 1277.7, 21],
];

const pins: [number, number, string][] = [
  [837.3, 941.7, "#fff56a"], [843.3, 934.3, "#fff56a"], [835.7, 1024.5, "#00e04f"], [842.3, 1034.3, "#fff56a"], [836.3, 1027.7, "#fff56a"],
  [872.3, 1034, "#ff776b"], [918.3, 1049, "#fff56a"], [940.3, 1046.3, "#fff56a"], [1126.7, 1063.3, "#00e04f"], [1182.3, 1109, "#fff56a"],
];

function Layer({ children }: { children: (t: Tile) => React.ReactNode }) {
  return (
    <>
      {tiles.map((t, i) => (
        <g key={i} transform={`translate(${t.x} ${t.y}) scale(0.33333)`} clipPath="url(#tile)">
          {children(t)}
        </g>
      ))}
    </>
  );
}

const polys = (list: string[] | undefined, fill: string) =>
  (list ?? []).map((p, i) => <polygon key={fill + i} points={p} fill={fill} />);
const lines = (list: string[] | undefined, stroke: string, w: number) =>
  (list ?? []).map((p, i) => (
    <polyline key={stroke + i} points={p} fill="none" stroke={stroke} strokeWidth={w} strokeLinejoin="round" strokeLinecap="round" />
  ));

function LondonMap() {
  return (
    <svg className="block h-[500px] w-[970px]" viewBox="439 799 970 500" fontFamily="Roboto, sans-serif">
      <defs>
        <clipPath id="tile">
          <rect x="-10" y="0" width="1000" height="785" />
        </clipPath>
        <path id="thamesWest" d="M538 1083 C545 1098 543 1118 555 1126 S562 1132 566 1135" />
        <path id="thamesMid" d="M1054 1019 Q1085 1023 1112 1044" />
        <path id="thamesEast" d="M1354 1168 Q1372 1181 1414 1183" />
      </defs>
      <rect x="439" y="799" width="970" height="500" fill="#e8eaed" />
      <Layer>{(t) => <>{polys(t.light, "#bbe2c6")}{polys(t.urban, "#e8eaed")}{polys(t.sand, "#f2e7d3")}{polys(t.park, "#a8dab5")}</>}</Layer>
      <Layer>{(t) => lines(t.rail, "#d5d8dc", 3)}</Layer>
      <Layer>{(t) => <>{polys(t.lake, "#9cc0f9")}{t.river.map(([p, w]) => lines([p], "#9cc0f9", w))}</>}</Layer>
      <Layer>{(t) => lines(t.minor, "#ffffff", 5)}</Layer>
      <Layer>{(t) => <>{lines(t.major, "#f9c65c", 10)}{lines(t.motorway, "#f5bd4c", 14)}</>}</Layer>
      <Layer>{(t) => <>{lines(t.major, "#fdecc0", 4)}{lines(t.motorway, "#fde5a6", 8)}</>}</Layer>

      <g>
        <rect x="514.3" y="799" width="17.4" height="12" rx="1.5" fill="#7370c9" />
        <text x="523" y="811" fontSize="9" fontWeight="700" fill="#fff" textAnchor="middle">M1</text>
        <rect x="1241" y="793" width="23" height="9" rx="1.5" fill="#7370c9" />
      </g>
      {shields.map(([t, x, y, w], i) => (
        <g key={i}>
          <rect x={x} y={y} width={w} height={11.5} rx={1.2} fill="#689f43" />
          <text x={x + 2.3} y={y + 9} fontSize="9" fontWeight="700" fill="#ffe11f" textLength={w - 4.6} lengthAdjust="spacingAndGlyphs">{t}</text>
        </g>
      ))}
      {labels.map(([t, x, y, w, k], i) => (
        <text
          key={i} x={x} y={y} textLength={w} fontSize={kinds[k].size} fontWeight={kinds[k].weight} fill={kinds[k].fill}
          lengthAdjust={k === "c" || k === "s" ? "spacing" : "spacingAndGlyphs"}
          stroke="#ffffff" strokeWidth={k === "l" ? 1.5 : 2} strokeOpacity={0.85} strokeLinejoin="round" paintOrder="stroke"
        >
          {t}
        </text>
      ))}
      <g fontSize="10" fill="#2f6ac9" letterSpacing="0.4">
        <text><textPath href="#thamesWest">River Thames</textPath></text>
        <text><textPath href="#thamesMid">River Thames</textPath></text>
        <text><textPath href="#thamesEast">River Thames</textPath></text>
      </g>
      <Layer>{(t) => <>{lines(t.amber, "#ffa200", 6)}{lines(t.red, "#fb0207", 6)}</>}</Layer>
      {pins.map(([x, y, c], i) => (
        <g key={i} transform={`translate(${x} ${y})`}>
          <path d="M0 22.4C-.4 14.5-3.6 10.6-6.4 6.3A8.6 8.6 0 1 1 6.4 6.3C3.6 10.6.4 14.5 0 22.4Z" fill={c} stroke="#111" strokeWidth="0.9" />
          <circle r="2.5" fill="#111" />
        </g>
      ))}
      <g fontFamily="Lato, sans-serif" fontSize="19.5" fontWeight="500" stroke="#fff" strokeWidth="1.5" paintOrder="stroke">
        <text x="449" y="1291" textLength="56" lengthAdjust="spacingAndGlyphs">
          <tspan fill="#4285f4">G</tspan><tspan fill="#ea4335">o</tspan><tspan fill="#fbbc05">o</tspan><tspan fill="#4285f4">g</tspan><tspan fill="#34a853">l</tspan><tspan fill="#ea4335">e</tspan>
        </text>
      </g>
    </svg>
  );
}

function Logo() {
  return (
    <svg className="h-[65px] w-[405px]" viewBox="67 90 1215 195">
      <path d="M79 108H858L918 191L858 275H79Q67 275 67 263V120Q67 108 79 108Z" fill="#fff" />
      <path d="M84 126H850L898 191L850 257H84Z" fill="#057bc6" />
      <path d="M815 132H845L887 191L845 251H815L857 191Z" fill="#fff" />
      <circle cx="147" cy="157" r="8.5" fill="#fff" />
      <path d="M140 166L122 178L117 200M146 166L148 200L160 233M141 196L130 214L112 229M150 172L158 188L170 191" fill="none" stroke="#fff" strokeWidth="8" strokeLinejoin="round" />
      <path d="M136 165L153 166L156 203L132 203Z" fill="#fff" />
      <rect x="193.500" y="142.500" width="144" height="97" rx="17" fill="#e6142f" stroke="#fff" strokeWidth="4" />
      <g fontFamily="'Liberation Sans', Arial, sans-serif" fill="#fff">
        <text x="204" y="216" fontSize="92" textLength="121" lengthAdjust="spacingAndGlyphs">ncn</text>
        <text x="363" y="216" fontSize="76" fontWeight="700" textLength="323" lengthAdjust="spacingAndGlyphs">reporting</text>
        <text x="960" y="214" fontSize="76" textLength="112" lengthAdjust="spacingAndGlyphs" fill="#e9f5ff">sus</text>
        <text x="1074" y="214" fontSize="76" fontWeight="700" textLength="177" lengthAdjust="spacingAndGlyphs">trans</text>
        <text x="1072" y="238" fontSize="16" fontWeight="700" textLength="179" lengthAdjust="spacingAndGlyphs">JOIN THE MOVEMENT</text>
      </g>
      <g fill="none" stroke="#fff" strokeWidth="4.500">
        <circle cx="729" cy="196" r="19" />
        <circle cx="795" cy="196" r="19" />
        <path d="M729 196L744 172H780L762 203H752L740 163M780 172L795 196M735 162H752M774 160H788V168M784 160L780 172M752 203L744 172M760 203H770" />
      </g>
      <path d="M1238 127H1218Q1212 127 1212 133V158Q1212 164 1218 164H1244Q1250 164 1250 158V142" fill="none" stroke="#fff" strokeWidth="8" />
      <path d="M1254 91L1277 114L1268 120L1261 115Q1260 140 1236 152Q1246 134 1244 115L1236 121L1229 113Z" fill="#fff" />
    </svg>
  );
}

function Filter({ children }: { children: string }) {
  return (
    <div className="flex h-[35px] justify-center bg-[#b3c8dc] pt-2 pr-[3px] font-['Liberation_Sans',Arial,sans-serif] text-[12px] leading-[15px] whitespace-nowrap text-white">
      {children}&nbsp;<span className="ml-0.5 font-['DejaVu_Sans',sans-serif] text-[9.5px] leading-[13px]">▼</span>
    </div>
  );
}

export default function App() {
  const link = "text-[#008cba]";
  return (
    <div className="flex h-[1379px] flex-col bg-white font-['Noto_Sans',sans-serif] text-[11px] leading-4 text-[#222]">
      <header className="relative h-[146px] shrink-0 border-b border-[#9aa5ae] bg-[#35adfd] text-white">
        <span className="absolute top-px left-[5px] text-[15px] leading-5 font-medium">β</span>
        <div className="mx-auto flex h-full w-[970px] flex-col">
          <div className="relative flex h-[110px] justify-between">
            <div className="pt-[30px] pl-[13px]">
              <Logo />
            </div>
            <div className="pt-[22px] text-[12px] leading-[17px] tracking-[-0.12px]">
              Christopher Reeve<span className="px-[7px]">•</span>sign out
            </div>
            <BsGear className="absolute top-[5px] -right-5 size-3.5 text-[#847d80]" />
          </div>
          <nav className="flex h-[35px] font-['Liberation_Sans',Arial,sans-serif] text-[13px] leading-[33px]">
            <span className="w-[68px] bg-[#1ba5fb] text-center">Issues</span>
            <span className="w-[88px] text-center">Segments</span>
            <span className="w-[78px] pl-[15px]">
              Updates <span className="-ml-0.5 font-['Noto_Sans',sans-serif] text-[10px]">(6)</span>
            </span>
            <span className="w-16 pl-[15px]">Users</span>
            <span className="pl-[15px]">Pages</span>
          </nav>
        </div>
      </header>

      <main className="mx-auto flex w-[970px] grow flex-col">
        <div className="flex h-[116px] items-start justify-between pr-[5px]">
          <h1 className="pt-[39px] font-['Liberation_Sans',Arial,sans-serif] text-[35px] leading-[49px]">Issues</h1>
          <div className="pt-[45px]">
            <div className="flex h-8">
              <div className="w-[187px] border border-r-0 border-[#ccc] pt-1 pl-2.5 text-[13px] leading-[25px] tracking-[-0.14px] text-[#aaa] shadow-[inset_0_1px_2px_rgba(0,0,0,0.1)]">
                place or coordinate
              </div>
              <div className="w-[127px] border border-[#a6a6a6] bg-[#e7e7e7] pt-px text-center font-['Liberation_Sans',Arial,sans-serif] text-[16px] leading-[25px] text-[#8c8c8c]">
                search &amp; report
              </div>
            </div>
            <p className="pl-2.5 text-[9px] leading-[18px] tracking-[0.08px] text-[#999]">leave blank to view your current location</p>
          </div>
        </div>

        <div className="flex h-8 items-start gap-2 text-[11px] leading-[19px] tracking-[-0.06px] text-[#555]">
          <span className="pt-[5px]">mode:</span>
          <span className={`pt-[5px] ${link}`}>national</span>
          <span className="mt-[5px] flex h-[19px] w-[50px] items-center justify-center border border-[#888] text-[#999]">regional</span>
          <span className={`pt-[5px] ${link}`}>customised</span>
        </div>
        <div className="h-[18px] text-[11px] leading-4 tracking-[-0.03px] text-[#aaa]">Issue filter options - reset</div>

        <div className="flex h-[35px] items-start justify-between">
          <div className="grid w-[597px] grid-cols-5 gap-5">
            <Filter>all groups</Filter>
            <Filter>all areas</Filter>
            <Filter>NCN 1</Filter>
            <Filter>status (default)</Filter>
            <Filter>sustrans</Filter>
          </div>
          <div className="flex pt-1.5 text-[11px] leading-4 tracking-[0.05px]">
            <span className="text-[#aaa]">❮ prev</span>
            <i className="ml-1 text-[#222]">1</i>
            <span className={`ml-1 ${link}`}>2 next ❯</span>
          </div>
        </div>
        <div className="h-[23px] pt-1.5 text-right text-[11px] leading-4 tracking-[0.18px] text-[#888]">
          1 to 10 of <span className="font-medium text-[#666]">14</span>
        </div>

        <div className="h-[399px] border border-[#ddd]">
          <div className={`${COLS} h-[37px] bg-[#f5f5f5] pb-[2px] font-medium ${link}`}>
            {["No.", "Category", "Issue", "Location", "Route", "Lat", "Lng", "Last updated", "Status", "", "p"].map((h, i) => (
              <span key={i} className="pl-2.5">{h}</span>
            ))}
          </div>
          {rows.map((r, i) => (
            <div key={r[0]} className={`${COLS} h-9 ${i % 2 ? "bg-[#f9f9f9]" : "bg-white"}`}>
              <span className={`pl-2.5 ${link}`}>{r[0]}</span>
              <span className="pl-2.5">{r[1]}</span>
              <span className="pl-2.5 tracking-[-0.06px]">{r[2]}</span>
              <span className="pl-2.5 tracking-[-0.05px]">{r[3]}</span>
              <span className="pl-2.5">NCN 1</span>
              <span className="pl-2.5">{r[4]}</span>
              <span className="pl-2.5">{r[5]}</span>
              <span className="pl-2.5">{r[6]}</span>
              <span className="pl-2.5">{r[7]}</span>
              <span className={`pl-[11px] ${link}`}>Show</span>
              <span className={`h-9 border-b border-[#e6e6e6] ${priority[r[8]]}`} />
            </div>
          ))}
        </div>
        <div className="h-[30px] text-right text-[9px] leading-4 text-[#888]">
          show <span className={`font-medium ${link}`}>100 per page</span> | download <span className={`font-medium ${link}`}>CSV</span>,{" "}
          <span className={`font-medium ${link}`}>PDF GPX</span>
        </div>

        <div className="relative h-[500px] w-[970px] overflow-hidden font-['Roboto',sans-serif]">
          <LondonMap />
          <div className="absolute top-2.5 left-2.5 flex h-10 w-[168px] rounded-sm bg-white text-[18px] leading-10 shadow-[0_1px_4px_rgba(0,0,0,0.3)]">
            <span className="w-[70px] border-r border-[#e6e6e6] text-center font-medium text-black">Map</span>
            <span className="grow text-center text-[#565656]">Satellite</span>
          </div>
          <div className="absolute top-2.5 right-2.5 flex size-10 items-center justify-center rounded-sm bg-white shadow-[0_1px_4px_rgba(0,0,0,0.3)]">
            <svg className="size-[18px]" viewBox="0 0 18 18" fill="#666">
              <path d="M0 0v6h2V2h4V0H0zm16 0h-4v2h4v4h2V0h-2zm0 16h-4v2h6v-6h-2v4zM2 12H0v6h6v-2H2v-4z" />
            </svg>
          </div>
          <div className="absolute top-[323px] right-2.5 flex size-10 items-center justify-center rounded-sm bg-white shadow-[0_1px_4px_rgba(0,0,0,0.3)]">
            <svg className="h-[31px] w-[18px]" viewBox="0 0 18 31" fill="#fbb72c" stroke="#8a7142" strokeWidth="0.7">
              <path d="M4 11h10q3 0 3.500 9H14l-.5 10H10l-1-8-1 8H4.500L4 20H.5Q1 11 4 11Z" />
              <path d="M5 11L9 17L13 11Z" fill="#ee7c27" stroke="none" />
              <circle cx="9" cy="6" r="5.300" />
            </svg>
          </div>
          <div className="absolute top-[395px] right-2.5 flex h-[81px] w-10 flex-col items-center rounded-sm bg-white shadow-[0_1px_4px_rgba(0,0,0,0.3)]">
            <svg className="h-10 w-[18px]" viewBox="0 0 18 40" fill="#666"><path d="M7 11h4v7h7v4h-7v7H7v-7H0v-4h7z" /></svg>
            <div className="h-px w-[30px] bg-[#e6e6e6]" />
            <svg className="h-10 w-[18px]" viewBox="0 0 18 40" fill="#666"><path d="M0 18h18v4H0z" /></svg>
          </div>
          <div className="absolute right-0 bottom-0 flex h-3.5 bg-[#f5f5f5]/70 pl-[5px] text-[10px] leading-[15px] text-black">
            <span className="w-[93px]">Keyboard shortcuts</span>
            <span className="w-[86px] border-l border-black/10 pl-[5px]">Map data ©2022</span>
            <span className="w-[72px] border-l border-black/10 pl-[5px]">Terms of Use</span>
            <span className="w-[95px] border-l border-black/10 pl-[5px]">Report a map error</span>
          </div>
        </div>
      </main>

      <footer className="h-[50px] shrink-0 bg-[#35adfd]">
        <div className="mx-auto w-[970px] pt-2.5 text-right text-[9px] leading-4 tracking-[0.07px] text-[#eaf6ff]">© 2015 Designed and created by cjreeve for Sustrans</div>
      </footer>
    </div>
  );
}
